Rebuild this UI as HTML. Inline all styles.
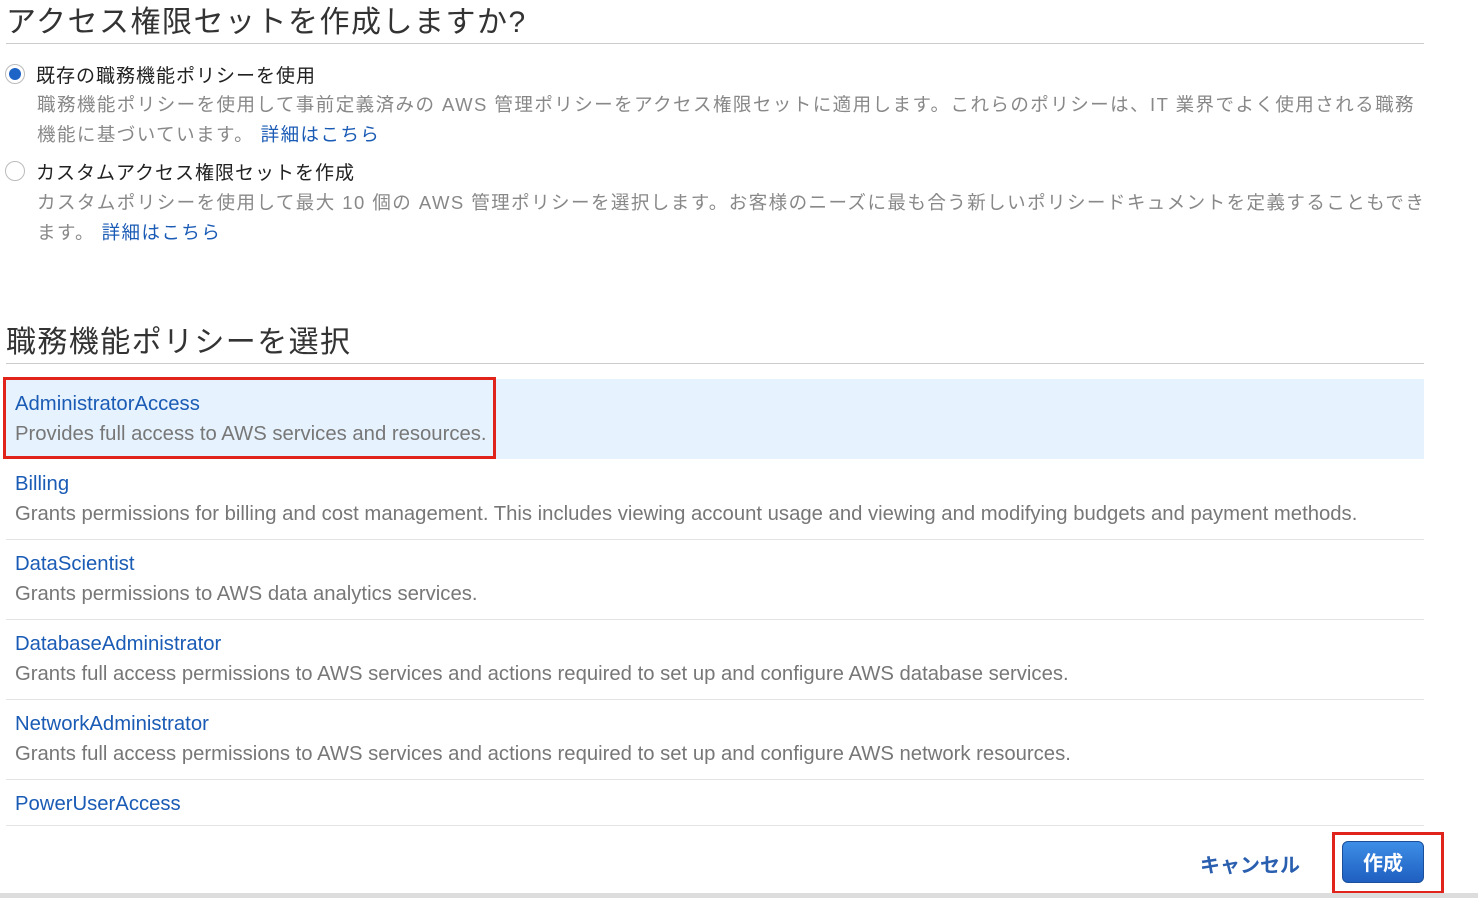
<!DOCTYPE html>
<html><head><meta charset="utf-8"><style>
body{margin:0;width:1478px;height:898px;background:#fff;font-family:"Liberation Sans","Noto Sans CJK JP",sans-serif;position:relative;overflow:hidden}
.a{position:absolute;white-space:nowrap}
.h{font-size:30px;color:#333;left:6px}
.hr{position:absolute;left:6px;width:1418px;height:1px;background:#ccc}
.r{font-size:19px;color:#222;left:36px;letter-spacing:1px}
.d{font-size:18.5px;color:#888;left:37px;letter-spacing:1.45px}
.lk{color:#1a5bb5}
.radio{position:absolute;left:5px;width:20px;height:20px;border-radius:50%;border:1px solid #bbb;box-sizing:border-box;background:#fff}
.row{position:absolute;left:6px;width:1418px;height:80px;border-bottom:1px solid #e4e4e4}
.t{position:absolute;left:9px;top:14px;font-size:20.3px;color:#1a5bb5}
.s{position:absolute;left:9px;top:44px;font-size:20.3px;color:#777}
</style></head><body>
<div class="a h" style="top:-3px;letter-spacing:1.5px">アクセス権限セットを作成しますか?</div>
<div class="hr" style="top:43px"></div>
<div class="radio" style="top:64px"><div style="position:absolute;left:3px;top:3px;width:12px;height:12px;border-radius:50%;background:#1e63c6"></div></div>
<div class="a r" style="top:61px">既存の職務機能ポリシーを使用</div>
<div class="a d" style="top:91px">職務機能ポリシーを使用して事前定義済みの AWS 管理ポリシーをアクセス権限セットに適用します。これらのポリシーは、IT 業界でよく使用される職務</div>
<div class="a d" style="top:121px">機能に基づいています。 <span class="lk">詳細はこちら</span></div>
<div class="radio" style="top:161px"></div>
<div class="a r" style="top:158px">カスタムアクセス権限セットを作成</div>
<div class="a d" style="top:189px">カスタムポリシーを使用して最大 10 個の AWS 管理ポリシーを選択します。お客様のニーズに最も合う新しいポリシードキュメントを定義することもでき</div>
<div class="a d" style="top:219px">ます。 <span class="lk">詳細はこちら</span></div>
<div class="a h" style="top:317px;letter-spacing:1.4px">職務機能ポリシーを選択</div>
<div class="hr" style="top:363px"></div>
<div class="row" style="top:379px;background:#e6f2fd;border-bottom:none;height:80px"><div class="t">AdministratorAccess</div><div class="s">Provides full access to AWS services and resources.</div></div>
<div style="position:absolute;left:3px;top:377px;width:487px;height:76px;border:3px solid #e0241b"></div>
<div class="row" style="top:459px"><div class="t">Billing</div><div class="s">Grants permissions for billing and cost management. This includes viewing account usage and viewing and modifying budgets and payment methods.</div></div>
<div class="row" style="top:539px"><div class="t">DataScientist</div><div class="s">Grants permissions to AWS data analytics services.</div></div>
<div class="row" style="top:619px"><div class="t">DatabaseAdministrator</div><div class="s">Grants full access permissions to AWS services and actions required to set up and configure AWS database services.</div></div>
<div class="row" style="top:699px"><div class="t">NetworkAdministrator</div><div class="s">Grants full access permissions to AWS services and actions required to set up and configure AWS network resources.</div></div>
<div class="row" style="top:779px;height:46px"><div class="t">PowerUserAccess</div></div>
<div class="a" style="left:1200px;top:849px;font-size:20px;font-weight:bold;color:#2a5fb0">キャンセル</div>
<div style="position:absolute;left:1332px;top:832px;width:106px;height:56px;border:3px solid #e0241b"></div>
<div style="position:absolute;left:1342px;top:841px;width:82px;height:42px;border-radius:6px;background:linear-gradient(#3d8ee6,#1f5fc0);border:1px solid #1a4f9c;box-sizing:border-box;color:#fff;font-size:20px;font-weight:bold;text-align:center;line-height:44px">作成</div>
<div style="position:absolute;left:0;top:893px;width:1478px;height:5px;background:#ddd"></div>
</body></html>
